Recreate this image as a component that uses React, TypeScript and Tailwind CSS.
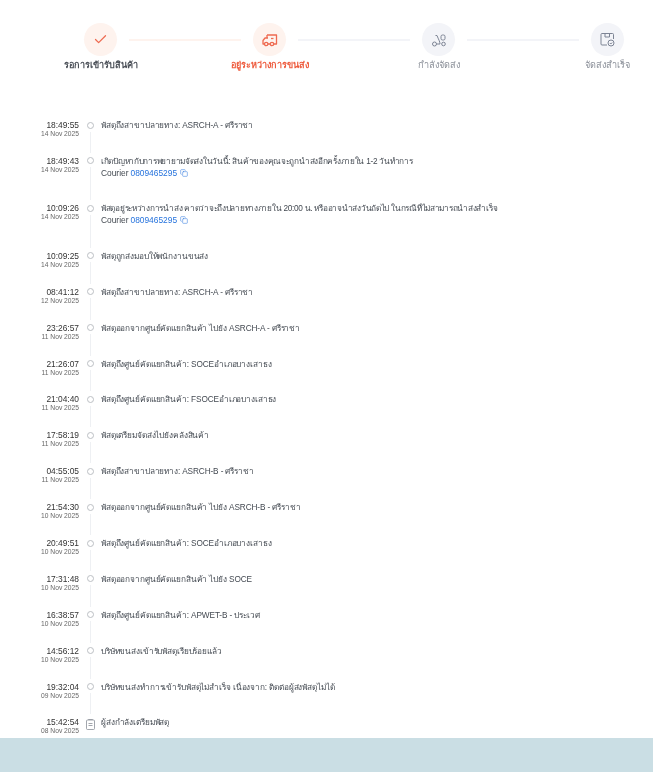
import { Check, Copy } from "lucide-react";

const font = "font-['Liberation_Sans','Noto_Sans','DejaVu_Sans',sans-serif]";

const events = [
  { time: "18:49:55", date: "14 Nov 2025", text: "พัสดุถึงสาขาปลายทาง: ASRCH-A - ศรีราชา" },
  { time: "18:49:43", date: "14 Nov 2025", text: "เกิดปัญหากับการพยายามจัดส่งในวันนี้: สินค้าของคุณจะถูกนำส่งอีกครั้งภายใน 1-2 วันทำการ", courier: true },
  { time: "10:09:26", date: "14 Nov 2025", text: "พัสดุอยู่ระหว่างการนำส่ง คาดว่าจะถึงปลายทางภายใน 20:00 น. หรืออาจนำส่งวันถัดไป ในกรณีที่ไม่สามารถนำส่งสำเร็จ", courier: true },
  { time: "10:09:25", date: "14 Nov 2025", text: "พัสดุถูกส่งมอบให้พนักงานขนส่ง" },
  { time: "08:41:12", date: "12 Nov 2025", text: "พัสดุถึงสาขาปลายทาง: ASRCH-A - ศรีราชา" },
  { time: "23:26:57", date: "11 Nov 2025", text: "พัสดุออกจากศูนย์คัดแยกสินค้า ไปยัง ASRCH-A - ศรีราชา" },
  { time: "21:26:07", date: "11 Nov 2025", text: "พัสดุถึงศูนย์คัดแยกสินค้า: SOCEอำเภอบางเสาธง" },
  { time: "21:04:40", date: "11 Nov 2025", text: "พัสดุถึงศูนย์คัดแยกสินค้า: FSOCEอำเภอบางเสาธง" },
  { time: "17:58:19", date: "11 Nov 2025", text: "พัสดุเตรียมจัดส่งไปยังคลังสินค้า" },
  { time: "04:55:05", date: "11 Nov 2025", text: "พัสดุถึงสาขาปลายทาง: ASRCH-B - ศรีราชา" },
  { time: "21:54:30", date: "10 Nov 2025", text: "พัสดุออกจากศูนย์คัดแยกสินค้า ไปยัง ASRCH-B - ศรีราชา" },
  { time: "20:49:51", date: "10 Nov 2025", text: "พัสดุถึงศูนย์คัดแยกสินค้า: SOCEอำเภอบางเสาธง" },
  { time: "17:31:48", date: "10 Nov 2025", text: "พัสดุออกจากศูนย์คัดแยกสินค้า ไปยัง SOCE" },
  { time: "16:38:57", date: "10 Nov 2025", text: "พัสดุถึงศูนย์คัดแยกสินค้า: APWET-B - ประเวศ" },
  { time: "14:56:12", date: "10 Nov 2025", text: "บริษัทขนส่งเข้ารับพัสดุเรียบร้อยแล้ว" },
  { time: "19:32:04", date: "09 Nov 2025", text: "บริษัทขนส่งทำการเข้ารับพัสดุไม่สำเร็จ เนื่องจาก: ติดต่อผู้ส่งพัสดุไม่ได้" },
  { time: "15:42:54", date: "08 Nov 2025", text: "ผู้ส่งกำลังเตรียมพัสดุ", last: true },
];

function TruckIcon() {
  return (
    <svg width="16" height="16" viewBox="0 0 16 16" fill="none" stroke="#ee6a50" strokeWidth="1.3" strokeLinejoin="round">
      <path d="M5 3h9.500v9h-2.500M8 12H6M2.500 12H1V8.500l2-2.500h3" />
      <path d="M5 3v3" />
      <circle cx="4.200" cy="12" r="1.700" />
      <circle cx="10" cy="12" r="1.700" />
      <path d="M9 6.500h2.500" />
    </svg>
  );
}

function ScooterIcon() {
  return (
    <svg width="16" height="16" viewBox="0 0 16 16" fill="none" stroke="#7d8494" strokeWidth="1">
      <circle cx="3.500" cy="12" r="2" />
      <circle cx="12.500" cy="12" r="1.800" />
      <path d="M5.500 12H9c0-2.500-1.500-4.500-3-8.500H4.500" />
      <rect x="10" y="3" width="4" height="5" rx="1.500" />
    </svg>
  );
}

function BoxIcon() {
  return (
    <svg width="17" height="17" viewBox="0 0 17 17" fill="none" stroke="#7d8494" strokeWidth="1">
      <path d="M8 14H3a1 1 0 0 1-1-1V3.500a1 1 0 0 1 1-1h10.500a1 1 0 0 1 1 1V8" />
      <path d="M6 2.500v3.500h4.500V2.500" />
      <circle cx="12" cy="12" r="3" />
      <path d="M10.800 12l1 1 1.400-1.500" />
    </svg>
  );
}

function ClipboardIcon() {
  return (
    <svg width="9" height="11" viewBox="0 0 9 11" fill="none" stroke="#8a8f98" strokeWidth="0.8">
      <rect x="0.500" y="1" width="8" height="9.500" rx="1" />
      <path d="M2.500 1V0.500h4V1M2.500 4.500h4M2.500 6.500h4" />
    </svg>
  );
}

function Step({ icon, label, tone, labelClass }: { icon: React.ReactNode; label: string; tone: string; labelClass: string }) {
  return (
    <div className="flex w-[33px] shrink-0 flex-col items-center">
      <div className={`flex h-[33px] w-[33px] items-center justify-center rounded-full ${tone}`}>{icon}</div>
      <div className={`mt-[3px] whitespace-nowrap text-[9.1px] leading-[12px] ${labelClass}`}>{label}</div>
    </div>
  );
}

function Bar({ color }: { color: string }) {
  return <div className={`mx-[12px] mt-[16px] h-[2px] w-[112px] shrink-0 ${color}`} />;
}

export default function App() {
  return (
    <div className={`flex h-[772px] w-[653px] flex-col overflow-hidden bg-white blur-[0.5px] ${font}`}>
      <div className="h-[738px] shrink-0">
        <div className="flex pl-[84px] pt-[23px]">
          <Step icon={<Check size={15} color="#ee6a50" strokeWidth={2} />} label="รอการเข้ารับสินค้า" tone="bg-[#fef3ee]" labelClass="font-bold text-[#4a4f57]" />
          <Bar color="bg-[#fef3ee]" />
          <Step icon={<TruckIcon />} label="อยู่ระหว่างการขนส่ง" tone="bg-[#fef3ee]" labelClass="font-bold text-[#ee5a3c]" />
          <Bar color="bg-[#f3f4f8]" />
          <Step icon={<ScooterIcon />} label="กำลังจัดส่ง" tone="bg-[#f3f4f8]" labelClass="text-[#8a8f98]" />
          <Bar color="bg-[#f3f4f8]" />
          <Step icon={<BoxIcon />} label="จัดส่งสำเร็จ" tone="bg-[#f3f4f8]" labelClass="text-[#8a8f98]" />
        </div>

        <div className="mt-[49px]">
          {events.map((e) => (
            <div key={e.time} className={`flex ${e.courier ? "h-[47.5px]" : "h-[35.9px]"}`}>
              <div className="w-[79px] shrink-0 text-right">
                <div className="text-[8.4px] leading-[10px] text-[#333]">{e.time}</div>
                <div className="text-[6.7px] leading-[8px] text-[#666]">{e.date}</div>
              </div>
              <div className="flex w-[22px] shrink-0 flex-col items-center pt-[1.5px]">
                {e.last ? (
                  <ClipboardIcon />
                ) : (
                  <>
                    <div className="h-[7px] w-[7px] rounded-full border border-[#bcbfc4]" />
                    <div className="mt-[3px] mb-[3px] w-px flex-1 bg-[#eef0f3]" />
                  </>
                )}
              </div>
              <div className="pt-px text-[8.4px] leading-[10px] text-[#444a52]">
                <div className={`whitespace-nowrap text-[8.25px] ${e.courier ? "tracking-[-0.28px]" : "tracking-[-0.13px]"}`}>{e.text}</div>
                {e.courier && (
                  <div className="mt-px flex items-center">
                    <span>Courier</span>
                    <span className="ml-[2px] text-[#2673dd]">0809465295</span>
                    <Copy size={8} color="#2673dd" strokeWidth={1.5} className="ml-[3px]" />
                  </div>
                )}
              </div>
            </div>
          ))}
        </div>
      </div>
      <div className="flex-1 bg-[#cadee4]" />
    </div>
  );
}
